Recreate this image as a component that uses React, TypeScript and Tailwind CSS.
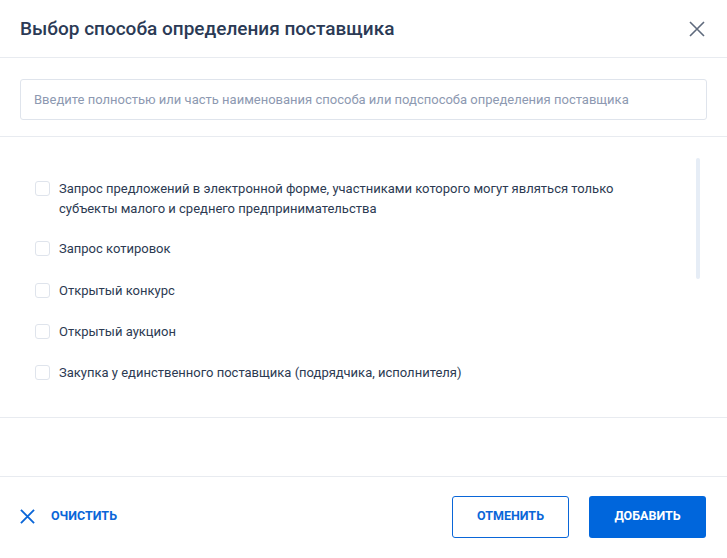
import React from "react";

const METHODS = [
  "Запрос предложений в электронной форме, участниками которого могут являться только субъекты малого и среднего предпринимательства",
  "Запрос котировок",
  "Открытый конкурс",
  "Открытый аукцион",
  "Закупка у единственного поставщика (подрядчика, исполнителя)",
];

function CloseIcon({ className }: { className?: string }) {
  return (
    <svg viewBox="0 0 16 16" className={className} fill="none" stroke="currentColor">
      <path d="M1 1L15 15M15 1L1 15" />
    </svg>
  );
}

export default function App() {
  return (
    <div
      className="w-[727px] h-[558px] bg-white flex flex-col text-[#2c3a52] overflow-hidden"
      style={{ fontFamily: "Roboto, 'Noto Sans', sans-serif" }}
    >
      {/* Header */}
      <div className="h-[58px] shrink-0 flex items-center justify-between pl-5 pr-[22px] border-b border-[#e8ebf0]">
        <h1 className="text-[19px] font-medium text-[#2b3a55] pt-[2px]">
          Выбор способа определения поставщика
        </h1>
        <button className="text-[#5f6a7d]">
          <CloseIcon className="w-4 h-4 stroke-[1.6]" />
        </button>
      </div>

      {/* Search */}
      <div className="h-[79px] shrink-0 px-5 pt-[21px] border-b border-[#e8ebf0]">
        <input
          className="w-full h-[41px] px-[13px] border border-[#dfe4ec] rounded-[3px] text-[13px] placeholder:text-[#8d99b1] outline-none"
          placeholder="Введите полностью или часть наименования способа или подспособа определения поставщика"
        />
      </div>

      {/* List */}
      <div className="h-[281px] shrink-0 flex pl-[35px] pr-[27px] pt-[21px] border-b border-[#e8ebf0]">
        <div className="flex-1 flex flex-col gap-[21px] pt-[21px] pr-10">
          {METHODS.map((m, i) => (
            <label
              key={m}
              className={`flex items-start gap-[9px] text-[13px] leading-[20px] text-[#2c3a52] ${
                i === 1 ? "-mt-[1px]" : i === 2 ? "mt-[1px]" : ""
              }`}
            >
              <span className="mt-[2px] w-[15px] h-[15px] shrink-0 border border-[#dfe4ec] rounded-[3px] bg-white" />
              <span>{m}</span>
            </label>
          ))}
        </div>
        <div className="w-[4px] h-[121px] rounded-full bg-[#e6edf6]" />
      </div>

      <div className="flex-1 border-b border-[#e8ebf0]" />

      {/* Footer */}
      <div className="h-[81px] shrink-0 flex items-center justify-between pl-5 pr-[21px] pb-[2px]">
        <button className="flex items-center gap-4 text-[#0a66d8] text-[12.5px] font-bold">
          <CloseIcon className="w-[15px] h-[15px] stroke-[2]" />
          ОЧИСТИТЬ
        </button>
        <div className="flex gap-5">
          <button className="w-[117px] h-[42px] rounded-[3px] border border-[#0a66d8] text-[#0a66d8] text-[12.5px] font-bold">
            ОТМЕНИТЬ
          </button>
          <button className="w-[117px] h-[42px] rounded-[3px] bg-[#0066dc] text-white text-[12.5px] font-bold">
            ДОБАВИТЬ
          </button>
        </div>
      </div>
    </div>
  );
}
